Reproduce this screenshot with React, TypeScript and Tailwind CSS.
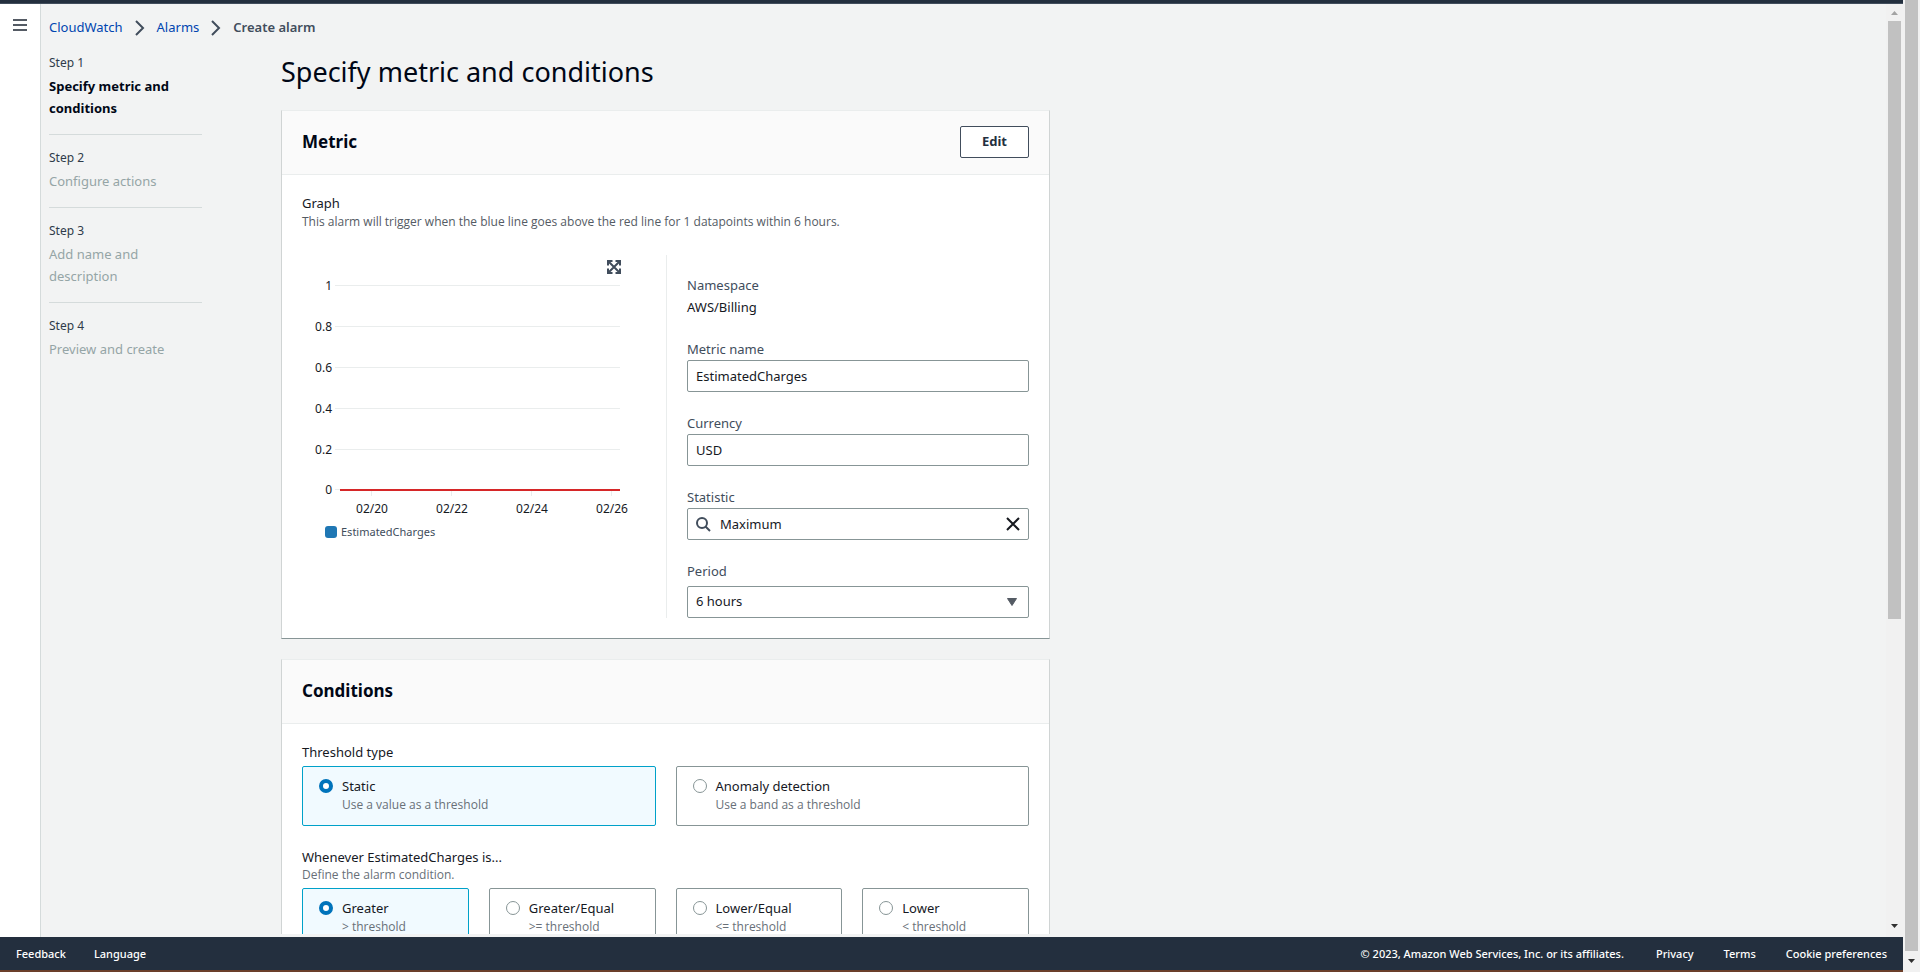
import { useState } from 'react';
import type { ReactNode } from 'react';

const FONT = "font-['Noto_Sans','Open_Sans',sans-serif]";
const SMALL = "font-['Open_Sans','Noto_Sans',sans-serif] text-[12px]";

function Chevron() {
  return (
    <svg className="h-4 w-3 shrink-0" viewBox="0 0 12 16" fill="none" stroke="#414d5c" strokeWidth="2" aria-hidden="true">
      <path d="M2 1l7 7-7 7" />
    </svg>
  );
}

const steps = [
  { label: 'Step 1', title: 'Specify metric and conditions', current: true },
  { label: 'Step 2', title: 'Configure actions', current: false },
  { label: 'Step 3', title: 'Add name and description', current: false },
  { label: 'Step 4', title: 'Preview and create', current: false },
];

function StepNav() {
  return (
    <nav aria-label="Steps" className="w-[153px] shrink-0">
      <ol>
        {steps.map((s, i) => (
          <li key={s.label} className={i === 0 ? 'pb-[15px]' : 'border-t border-[#d5dbdb] py-[15px]'}>
            <div className="mb-1 text-[12px] leading-4 text-[#2f3b4a]">{s.label}</div>
            <div
              className={
                s.current
                  ? 'text-[13px] leading-[22px] font-bold text-[#000716]'
                  : 'text-[13px] leading-[22px] text-[#95a5a6]'
              }
            >
              {s.title}
            </div>
          </li>
        ))}
      </ol>
    </nav>
  );
}

function Card({ title, action, children }: { title: string; action?: ReactNode; children: ReactNode }) {
  return (
    <section className="border border-t-[#eaeded] border-x-[#d0d4d4] border-b-[#879596] bg-white">
      <header className="flex h-16 items-center justify-between border-b border-[#eaeded] bg-[#fafafa] px-5 pb-px">
        <h2 className="text-[17px] leading-6 font-bold text-[#000716]">{title}</h2>
        {action}
      </header>
      <div className="p-5">{children}</div>
    </section>
  );
}

const yTicks = ['1', '0.8', '0.6', '0.4', '0.2', '0'];
const xTicks = ['02/20', '02/22', '02/24', '02/26'];

function Chart() {
  return (
    <figure className="w-[365px] border-r border-[#eaeded]">
      <div className="flex justify-end pt-[5px] pr-[45px]">
        <button type="button" aria-label="Expand graph" className="h-[14px] w-[14px]">
          <svg viewBox="0 0 14 14" className="h-[14px] w-[14px]" fill="none" stroke="#414d5c" strokeWidth="2" aria-hidden="true">
            <path d="M1 5.5V1h4.500M8.500 1H13v4.500M13 8.500V13H8.500M5.500 13H1V8.500" />
            <path d="M2 2l10 10M12 2L2 12" />
          </svg>
        </button>
      </div>
      <svg className="block h-[250px] w-[340px]" viewBox="0 0 340 250" role="img" aria-label="Estimated charges">
        {yTicks.map((t, i) => (
          <g key={t}>
            <rect x="33" y={11 + i * 41 - (i === 5 ? 1 : 0)} width="285" height="1" fill="#eaeded" />
            <text x="30" y={16 + i * 41 - (i === 5 ? 1 : 0)} textAnchor="end" fontSize="12" fill="#16191f">
              {t}
            </text>
          </g>
        ))}
        {xTicks.map((t, i) => (
          <g key={t}>
            <rect x={69 + i * 80} y="217" width="1" height="5" fill="#eaeded" />
            <text x={70 + i * 80} y="239" textAnchor="middle" fontSize="12" fill="#16191f">
              {t}
            </text>
          </g>
        ))}
        <rect x="38" y="215" width="280" height="2" fill="#d62728" />
      </svg>
      <figcaption className="flex items-center gap-1 pl-[23px] text-[11px] leading-4 text-[#414d5c]">
        <span className="h-3 w-3 rounded-[3px] bg-[#1f77b4]" />
        EstimatedCharges
      </figcaption>
    </figure>
  );
}

const label = 'block text-[13px] leading-[22px] text-[#414d5c]';
const box = 'h-8 w-full rounded-[2px] border border-[#879596] bg-white text-[13px] text-[#16191f]';

function MetricFields() {
  const [statistic, setStatistic] = useState('Maximum');
  return (
    <div className="flex-1 pt-[19px] pl-5">
      <div className={label}>Namespace</div>
      <div className="mb-5 text-[13px] leading-[22px] text-[#16191f]">AWS/Billing</div>
      <div className="mb-5">
        <label htmlFor="metric-name" className={label}>Metric name</label>
        <input id="metric-name" defaultValue="EstimatedCharges" className={`${box} px-2`} />
      </div>
      <div className="mb-5">
        <label htmlFor="currency" className={label}>Currency</label>
        <input id="currency" defaultValue="USD" className={`${box} px-2`} />
      </div>
      <div className="mb-5">
        <label htmlFor="statistic" className={label}>Statistic</label>
        <div className="relative">
          <input id="statistic" value={statistic} onChange={(e) => setStatistic(e.target.value)} className={`${box} px-8`} />
          <svg className="pointer-events-none absolute top-2 left-2 h-4 w-4" viewBox="0 0 16 16" fill="none" stroke="#414d5c" strokeWidth="2" aria-hidden="true">
            <circle cx="7" cy="7" r="5" />
            <path d="M10.5 10.5L15 15" />
          </svg>
          <button type="button" aria-label="Clear" onClick={() => setStatistic('')} className="absolute top-2 right-2 h-4 w-4">
            <svg viewBox="0 0 16 16" className="h-4 w-4" fill="none" stroke="#16191f" strokeWidth="2" aria-hidden="true">
              <path d="M2 2l12 12M14 2L2 14" />
            </svg>
          </button>
        </div>
      </div>
      <div>
        <label htmlFor="period" className={`${label} mb-1`}>Period</label>
        <div className="relative">
          <select id="period" className={`${box} appearance-none px-2`}>
            <option>6 hours</option>
          </select>
          <svg className="pointer-events-none absolute top-3 right-3 h-2 w-[10px]" viewBox="0 0 10 8" aria-hidden="true">
            <path d="M0.5 0.5h9L5 7.5z" fill="#545b64" stroke="#545b64" strokeLinejoin="round" />
          </svg>
        </div>
      </div>
    </div>
  );
}

type Option = { title: string; hint: string };

const thresholdTypes: Option[] = [
  { title: 'Static', hint: 'Use a value as a threshold' },
  { title: 'Anomaly detection', hint: 'Use a band as a threshold' },
];
const operators: Option[] = [
  { title: 'Greater', hint: '> threshold' },
  { title: 'Greater/Equal', hint: '>= threshold' },
  { title: 'Lower/Equal', hint: '<= threshold' },
  { title: 'Lower', hint: '< threshold' },
];

function Tiles({ name, options, columns }: { name: string; options: Option[]; columns: string }) {
  const [selected, setSelected] = useState(0);
  return (
    <div className={`grid gap-5 ${columns}`}>
      {options.map((o, i) => (
        <label
          key={o.title}
          className={`flex h-[60px] gap-[9px] rounded-[2px] border px-4 pt-[9px] ${
            i === selected ? 'border-[#00a1c9] bg-[#f1faff]' : 'border-[#879596] bg-white'
          }`}
        >
          <input
            type="radio"
            name={name}
            checked={i === selected}
            onChange={() => setSelected(i)}
            className="mt-[3px] h-[14px] w-[14px] shrink-0 appearance-none rounded-full border border-[#879596] bg-white checked:border-4 checked:border-[#0073bb]"
          />
          <span>
            <span className="block text-[13px] leading-5 text-[#16191f]">{o.title}</span>
            <span className={`${SMALL} block leading-[18px] text-[#687078]`}>{o.hint}</span>
          </span>
        </label>
      ))}
    </div>
  );
}

function Arrow({ up, color }: { up?: boolean; color: string }) {
  return (
    <svg className="h-1 w-[7px]" viewBox="0 0 7 4" aria-hidden="true">
      <path d={up ? 'M0 4L3.5 0 7 4z' : 'M0 0h7L3.5 4z'} fill={color} />
    </svg>
  );
}

export default function App() {
  return (
    <div className={`flex h-screen overflow-hidden bg-[#f2f3f3] ${FONT}`}>
      <div className="flex min-w-0 flex-1 flex-col">
        <div className="h-1 shrink-0 border-b border-[#414d5c] bg-[#232f3e]" />
        <div className="flex min-h-0 flex-1">
          <aside className="w-[41px] shrink-0 border-r border-[#d5dbdb] bg-white pt-[13px] pl-[13px]">
            <button type="button" aria-label="Open navigation" className="block h-4 w-[14px]">
              <svg viewBox="0 0 14 16" className="h-4 w-[14px]" stroke="#545b64" strokeWidth="2" aria-hidden="true">
                <path d="M0 3h14M0 8h14M0 13h14" />
              </svg>
            </button>
          </aside>
          <main className="mb-[3px] min-w-0 flex-1 overflow-hidden pl-2">
            <nav aria-label="Breadcrumb" className="flex h-12 items-center gap-[11px] text-[13px]">
              <a href="#cloudwatch" className="text-[#0045b0]">CloudWatch</a>
              <Chevron />
              <a href="#alarms" className="text-[#0045b0]">Alarms</a>
              <Chevron />
              <span className="font-semibold text-[#414d5c]">Create alarm</span>
            </nav>
            <div className="flex gap-[79px] pt-[3px]">
              <StepNav />
              <div className="w-full max-w-[769px]">
                <h1 className="mb-[21px] text-[27px] leading-[34px] text-[#000716]">Specify metric and conditions</h1>
                <div className="flex flex-col gap-5">
                  <Card
                    title="Metric"
                    action={
                      <button type="button" className="h-8 rounded-[2px] border border-[#414d5c] bg-white px-[21px] text-[13px] font-bold text-[#232f3e]">
                        Edit
                      </button>
                    }
                  >
                    <h3 className="text-[13px] leading-[17px] text-[#16191f]">Graph</h3>
                    <p className={`${SMALL} mb-[23px] leading-5 text-[#545b64]`}>
                      This alarm will trigger when the blue line goes above the red line for 1 datapoints within 6 hours.
                    </p>
                    <div className="flex">
                      <Chart />
                      <MetricFields />
                    </div>
                  </Card>
                  <Card title="Conditions">
                    <h3 className="mb-[6px] text-[13px] leading-4 text-[#16191f]">Threshold type</h3>
                    <Tiles name="threshold-type" options={thresholdTypes} columns="grid-cols-2" />
                    <h3 className="mt-[22px] text-[13px] leading-[18px] text-[#16191f]">Whenever EstimatedCharges is...</h3>
                    <p className={`${SMALL} mb-1 leading-[18px] text-[#687078]`}>Define the alarm condition.</p>
                    <Tiles name="operator" options={operators} columns="grid-cols-4" />
                  </Card>
                </div>
              </div>
            </div>
          </main>
          <div className="flex w-[17px] shrink-0 flex-col items-center justify-between bg-[#f1f1f1] pt-[7px] pb-[9px]" aria-hidden="true">
            <div className="flex flex-col items-center gap-[6px]">
              <Arrow up color="#a3a3a3" />
              <div className="h-[598px] w-[13px] bg-[#c1c1c1]" />
            </div>
            <Arrow color="#303030" />
          </div>
        </div>
        <footer className="flex h-[33px] shrink-0 items-center justify-between bg-[#232f3e] px-4 pt-[2px] text-[11px] font-medium text-white">
          <div className="flex gap-7">
            <a href="#feedback">Feedback</a>
            <a href="#language">Language</a>
          </div>
          <div className="flex">
            <span className="mr-8">© 2023, Amazon Web Services, Inc. or its affiliates.</span>
            <a href="#privacy" className="mr-[30px]">Privacy</a>
            <a href="#terms" className="mr-[30px]">Terms</a>
            <a href="#cookies">Cookie preferences</a>
          </div>
        </footer>
        <div className="h-[2px] shrink-0 bg-[#6b3f2a]" />
      </div>
      <div className="flex w-[17px] shrink-0 flex-col items-center bg-[#f1f1f1] pb-[9px]" aria-hidden="true">
        <div className="mb-2 w-[13px] flex-1 bg-[#c1c1c1]" />
        <Arrow color="#303030" />
      </div>
    </div>
  );
}
